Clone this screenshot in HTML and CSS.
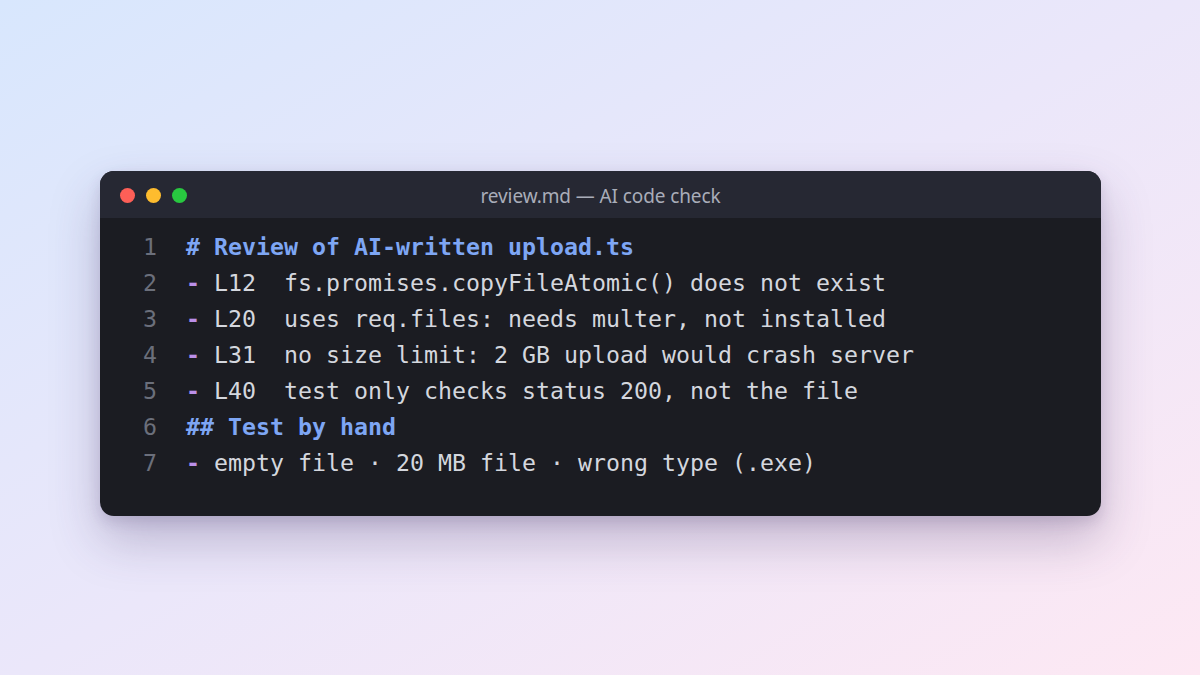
FILE: index.html
```html
<!DOCTYPE html>
<html lang="en">
<head>
<meta charset="utf-8">
<title>review.md — AI code check</title>
<link rel="stylesheet" href="styles.css">
</head>
<body>
<main class="stage">
  <section class="window">
    <header class="titlebar">
      <div class="lights">
        <span class="dot red"></span>
        <span class="dot yellow"></span>
        <span class="dot green"></span>
      </div>
      <div class="title">review.md — AI code check</div>
    </header>
    <div class="editor">
      <div class="line"><span class="num">1</span><span class="code"><span class="h">#</span> <span class="h">Review of AI-written upload.ts</span></span></div>
      <div class="line"><span class="num">2</span><span class="code"><span class="dash">-</span> L12  fs.promises.copyFileAtomic() does not exist</span></div>
      <div class="line"><span class="num">3</span><span class="code"><span class="dash">-</span> L20  uses req.files: needs multer, not installed</span></div>
      <div class="line"><span class="num">4</span><span class="code"><span class="dash">-</span> L31  no size limit: 2 GB upload would crash server</span></div>
      <div class="line"><span class="num">5</span><span class="code"><span class="dash">-</span> L40  test only checks status 200, not the file</span></div>
      <div class="line"><span class="num">6</span><span class="code"><span class="h">## Test by hand</span></span></div>
      <div class="line"><span class="num">7</span><span class="code"><span class="dash">-</span> empty file · 20 MB file · wrong type (.exe)</span></div>
    </div>
  </section>
</main>
</body>
</html>
```

FILE: styles.css
```css
* { box-sizing: border-box; }
html, body { margin: 0; padding: 0; }
body {
  width: 1200px;
  height: 675px;
  overflow: hidden;
  background: linear-gradient(150deg, #d8e7fd 0%, #ebe7fa 50%, #fde8f3 100%);
  font-family: "Noto Sans", "Open Sans", sans-serif;
}
.stage {
  height: 675px;
  display: flex;
  justify-content: center;
  padding-top: 171px;
  padding-left: 1px;
}
.window {
  width: 1001px;
  height: 345px;
  border-radius: 14px;
  overflow: hidden;
  background: #1b1c22;
  box-shadow: 0 24px 50px rgba(70, 50, 100, 0.28), 0 6px 14px rgba(70, 50, 100, 0.15);
  display: flex;
  flex-direction: column;
}
.titlebar {
  height: 47px;
  background: #262833;
  display: flex;
  align-items: center;
  position: relative;
  padding-left: 20px;
  padding-top: 1px;
}
.lights { display: flex; gap: 11px; }
.dot { width: 15px; height: 15px; border-radius: 50%; display: block; }
.red { background: #fd5f57; }
.yellow { background: #febc2e; }
.green { background: #28c840; }
.title {
  position: absolute;
  left: 0; right: 0; top: 2px; bottom: 0;
  display: flex;
  align-items: center;
  justify-content: center;
  color: #a9adb9;
  font-size: 19px;
  letter-spacing: -0.1px;
}
.editor {
  padding-top: 11px;
  font-family: "DejaVu Sans Mono", "Liberation Mono", monospace;
  font-size: 23.25px;
  line-height: 36px;
  color: #d4d7de;
}
.line { display: flex; white-space: pre; }
.num {
  width: 57px;
  text-align: right;
  color: #6b6f7b;
  flex: none;
}
.code { margin-left: 29px; }
.h { color: #7ea6f4; font-weight: bold; }
.dash { color: #bb8fe8; font-weight: bold; }
```
